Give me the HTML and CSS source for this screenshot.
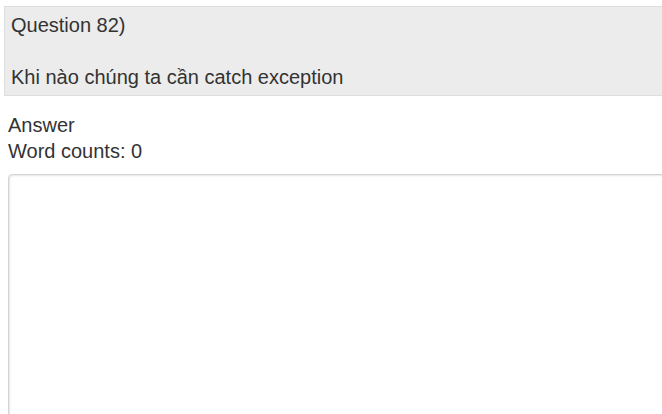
FILE: index.html
```html
<!DOCTYPE html>
<html>
<head>
<meta charset="utf-8">
<link rel="stylesheet" href="styles.css">
</head>
<body>
<div class="page">
  <div class="question">
    <p>Question 82)</p>
    <p class="blank">&nbsp;</p>
    <p>Khi nào chúng ta cần catch exception</p>
  </div>
  <div class="answer">
    <div class="label">Answer</div>
    <div class="label">Word counts: <span class="count">0</span></div>
    <textarea class="answer-box"></textarea>
  </div>
</div>
</body>
</html>
```
FILE: styles.css
```css
html, body {
  margin: 0;
  padding: 0;
  overflow: hidden;
  background: #fff;
}
body {
  font-family: "Liberation Sans", Arial, sans-serif;
  font-size: 20px;
  line-height: 26px;
  color: #333;
}
.page {
  width: 720px;
  padding: 6px 0 0 4px;
}
.question {
  background: #ececec;
  border: 1px solid #ddd;
  padding: 5px 6px 5px 6px;
}
.question p {
  margin: 0;
}
.answer {
  padding: 16px 0 0 4px;
}
.label {
  line-height: 26px;
}
.answer-box {
  display: block;
  margin-top: 10px;
  width: 700px;
  height: 300px;
  border: 1px solid #d4d4d4;
  border-radius: 4px;
  box-shadow: inset 1px 1px 2px rgba(0,0,0,0.1);
  background: #fff;
  resize: none;
  font: inherit;
}
```
